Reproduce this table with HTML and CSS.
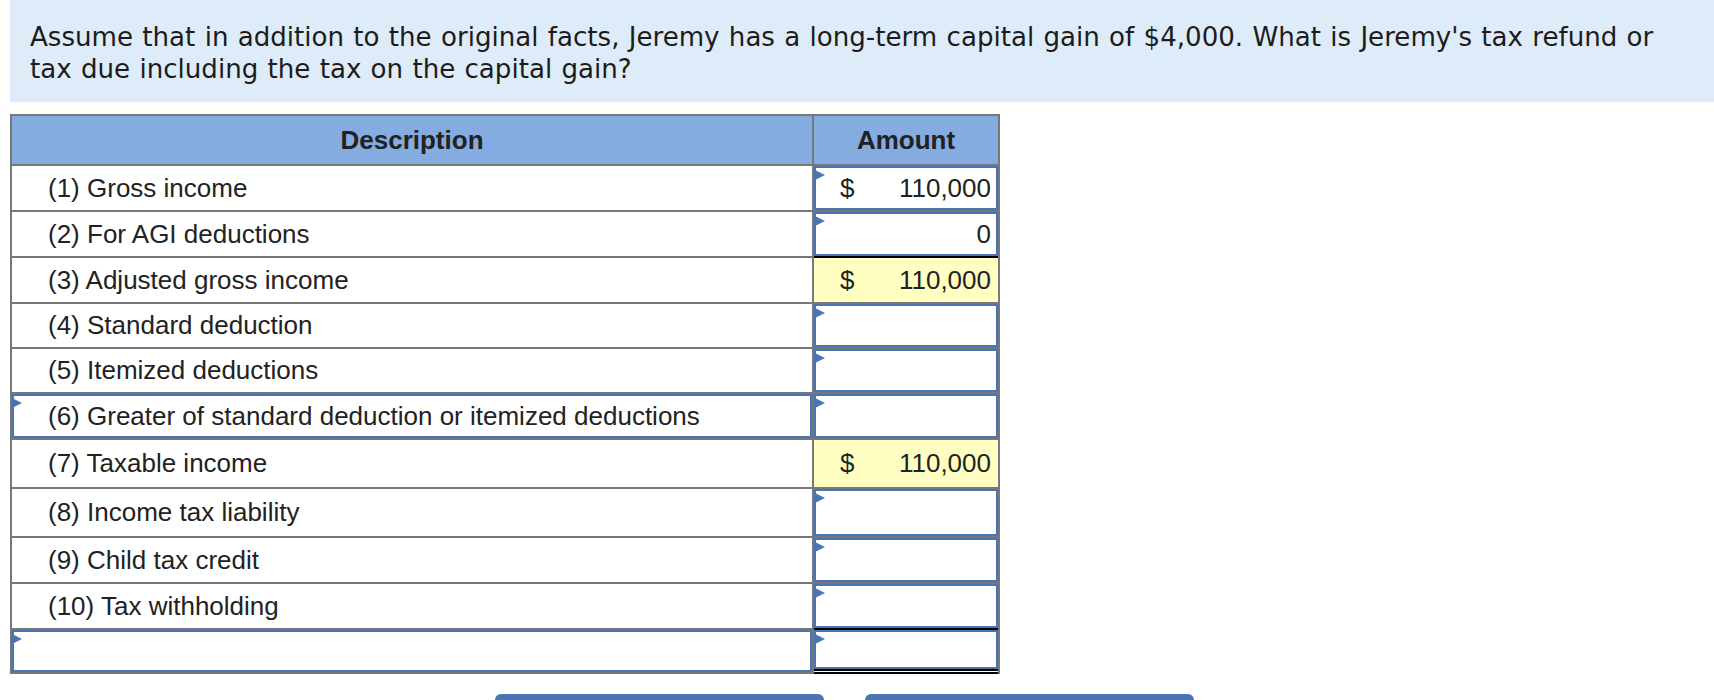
FILE: index.html
```html
<!DOCTYPE html>
<html>
<head>
<meta charset="utf-8">
<link rel="stylesheet" href="styles.css">
</head>
<body>
<div class="question">Assume that in addition to the original facts, Jeremy has a long-term capital gain of $4,000. What is Jeremy's tax refund or tax due including the tax on the capital gain?</div>

<div class="sheet">
  <div class="row head">
    <div class="cell desc">Description</div>
    <div class="cell amt">Amount</div>
  </div>

  <div class="row">
    <div class="cell desc">(1) Gross income</div>
    <div class="cell amt"><div class="input"><span>$</span><span>110,000</span></div></div>
  </div>
  <div class="row">
    <div class="cell desc">(2) For AGI deductions</div>
    <div class="cell amt"><div class="input right"><span>0</span></div></div>
  </div>
  <div class="row">
    <div class="cell desc">(3) Adjusted gross income</div>
    <div class="cell amt total"><div class="calc"><span>$</span><span>110,000</span></div></div>
  </div>
  <div class="row r45">
    <div class="cell desc">(4) Standard deduction</div>
    <div class="cell amt"><div class="input"></div></div>
  </div>
  <div class="row r45">
    <div class="cell desc">(5) Itemized deductions</div>
    <div class="cell amt"><div class="input"></div></div>
  </div>
  <div class="row">
    <div class="cell desc editable"><div class="input text">(6) Greater of standard deduction or itemized deductions</div></div>
    <div class="cell amt"><div class="input"></div></div>
  </div>
  <div class="row r49">
    <div class="cell desc">(7) Taxable income</div>
    <div class="cell amt"><div class="calc"><span>$</span><span>110,000</span></div></div>
  </div>
  <div class="row r49">
    <div class="cell desc">(8) Income tax liability</div>
    <div class="cell amt"><div class="input"></div></div>
  </div>
  <div class="row">
    <div class="cell desc">(9) Child tax credit</div>
    <div class="cell amt"><div class="input"></div></div>
  </div>
  <div class="row">
    <div class="cell desc">(10) Tax withholding</div>
    <div class="cell amt"><div class="input"></div></div>
  </div>
  <div class="row last">
    <div class="cell desc editable"><div class="input text"></div></div>
    <div class="cell amt total grand"><div class="input"></div></div>
  </div>
</div>

<div class="buttons">
  <div class="btn"></div>
  <div class="btn"></div>
</div>
</body>
</html>
```

FILE: styles.css
```css
html, body {
  margin: 0;
  padding: 0;
  background: #ffffff;
}

body {
  overflow: hidden;
  height: 700px;
}

.question {
  margin-left: 10px;
  background: #deebf8;
  padding: 21px 20px 17px 20px;
  font-family: "DejaVu Sans", Verdana, sans-serif;
  font-size: 26.1px;
  line-height: 32px;
  word-spacing: 1px;
  color: #1c1c1c;
}

.sheet {
  margin: 12px 0 0 10px;
  width: 990px;
  box-sizing: border-box;
  border: 2px solid #787878;
  border-bottom: none;
  font-family: "Liberation Sans", Arial, Helvetica, sans-serif;
  font-size: 26px;
  color: #222222;
}

.row {
  display: flex;
  height: 46px;
}

.row.r45 { height: 45px; }
.row.r49 { height: 49px; }
.row.last { height: 46px; }

.row.head {
  height: 48px;
  background: #84ace0;
  font-weight: bold;
}

.cell {
  box-sizing: border-box;
  display: flex;
  align-items: center;
}

.row + .row .cell {
  border-top: 2px solid #787878;
}

.desc {
  width: 802px;
  border-right: 2px solid #787878;
  padding-left: 36px;
}

.amt {
  flex: 1;
  align-items: stretch;
}

.head .cell {
  justify-content: center;
  align-items: center;
  padding-left: 0;
}

.row .amt.total {
  border-top-color: #000000;
}

.row.last .desc {
  border-bottom: 2px solid #787878;
}

.row.last .amt.grand {
  border-bottom: 5px double #000000;
}

.desc.editable {
  padding-left: 0;
  align-items: stretch;
}

.input {
  position: relative;
  flex: 1;
  box-sizing: border-box;
  border: 2px solid #4a74b4;
  background: #ffffff;
  display: flex;
  align-items: center;
  justify-content: space-between;
  padding: 0 5px 0 24px;
  font-size: 26px;
}

.input.right {
  justify-content: flex-end;
}

.input.text {
  padding-left: 34px;
  justify-content: flex-start;
}

.input::before {
  content: "";
  position: absolute;
  left: -1px;
  top: 2px;
  width: 0;
  height: 0;
  border-left: 10px solid #4a74b4;
  border-top: 5px solid transparent;
  border-bottom: 5px solid transparent;
}

.input.text::before {
  left: -2px;
}

.calc {
  flex: 1;
  background: #ffffc2;
  display: flex;
  align-items: center;
  justify-content: space-between;
  padding: 0 7px 0 26px;
  font-size: 26px;
}

.buttons {
  display: flex;
  gap: 41px;
  padding-left: 495px;
  margin-top: 20px;
}

.btn {
  width: 329px;
  height: 40px;
  background: #4a74b4;
  border-radius: 6px 6px 0 0;
}
```
